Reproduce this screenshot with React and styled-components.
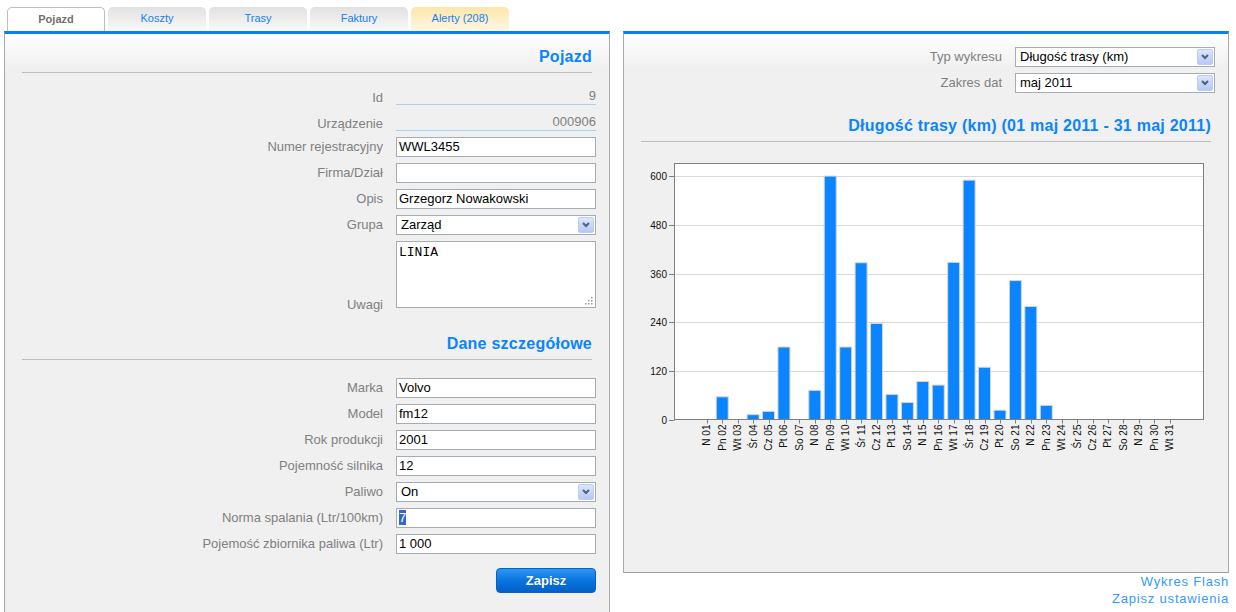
import React from 'react';
import styled, { createGlobalStyle } from 'styled-components';

const GlobalStyle = createGlobalStyle`
  html, body { margin: 0; padding: 0; background: #fff; }
  body {
    font-family: "Liberation Sans", Arial, sans-serif;
    font-size: 13px;
    color: #000;
    overflow: hidden;
  }
`;

const Page = styled.div`
  width: 1236px;
  height: 612px;
  box-sizing: border-box;
  padding: 7px 0 0 4px;
  display: grid;
  grid-template-columns: 606px 606px;
  grid-template-rows: 24px 1fr;
  column-gap: 13px;
`;

const Tabs = styled.div`
  display: flex;
  gap: 3px;
  padding-left: 3px;
  align-items: flex-end;
`;

const Tab = styled.div`
  width: 98px;
  height: 24px;
  box-sizing: border-box;
  border-radius: 5px 5px 0 0;
  display: flex;
  align-items: center;
  justify-content: center;
  font-size: 11px;
  color: ${p => (p.$active ? '#707070' : '#1580f2')};
  font-weight: ${p => (p.$active ? 'bold' : 'normal')};
  background: ${p =>
    p.$active
      ? '#fff'
      : p.$alert
      ? 'linear-gradient(#fde6ab, #fff7e4)'
      : 'linear-gradient(#e1e1e1, #f9f9f9)'};
  border: ${p => (p.$active ? '1px solid #bdbdbd' : 'none')};
  border-bottom: none;
  padding-bottom: 2px;
`;

const Panel = styled.div`
  box-sizing: border-box;
  border-top: 3px solid #0a80f2;
  border-left: 1px solid #a9a9a9;
  border-right: 1px solid #a9a9a9;
  border-bottom: ${p => (p.$closed ? '1px solid #a0a0a0' : 'none')};
  background: linear-gradient(#ffffff 0px, #f0f0f0 34px, #f0f0f0 100%);
  height: ${p => p.$h}px;
  padding-top: 13px;
`;

const Heading = styled.div`
  margin: ${p => p.$top || 0}px 17px 0 17px;
  padding-bottom: 5px;
  border-bottom: 1px solid #bdbdbd;
  text-align: right;
  font-size: 16px;
  line-height: 20px;
  font-weight: bold;
  letter-spacing: 0.25px;
  color: #0a84ff;
`;

const Form = styled.div`
  display: grid;
  grid-template-columns: 1fr 200px;
  grid-auto-rows: 20px;
  column-gap: 13px;
  row-gap: 6px;
  padding: ${p => p.$top}px ${p => p.$right || 13}px 0 17px;
`;

const Label = styled.div`
  text-align: right;
  color: #7f7f7f;
  white-space: nowrap;
  line-height: 20px;
  align-self: ${p => (p.$bottom ? 'end' : 'center')};
  ${p => (p.$bottom ? 'line-height: 16px;' : '')}
  ${p => (p.$read ? 'padding-top: 5px; line-height: 17px;' : '')}
`;

const ReadValue = styled.div`
  box-sizing: border-box;
  height: 20px;
  padding-top: 3px;
  line-height: 16px;
  text-align: right;
  color: #7f7f7f;
  border-bottom: 1px solid #a9cff5;
`;

const TextBox = styled.div`
  box-sizing: border-box;
  height: 20px;
  line-height: 18px;
  padding: 0 2px;
  background: #fff;
  border: 1px solid #a5acb2;
  white-space: nowrap;
  overflow: hidden;
`;

const Selected = styled.span`
  background: #3169c6;
  color: #fff;
`;

const SelectBox = styled.div`
  box-sizing: border-box;
  height: 20px;
  background: #fff;
  border: 1px solid #a5acb2;
  display: flex;
  align-items: stretch;
`;

const SelectText = styled.div`
  flex: 1;
  line-height: 18px;
  padding-left: 4px;
  white-space: nowrap;
  overflow: hidden;
`;

const DropButton = styled.div`
  width: 16px;
  margin: 1px;
  box-sizing: border-box;
  border: 1px solid #bccdf3;
  border-radius: 2px;
  background: linear-gradient(#dce6fc, #b6c9f5);
  display: flex;
  align-items: center;
  justify-content: center;
`;

const TextArea = styled.div`
  grid-row: span 3;
  position: relative;
  box-sizing: border-box;
  background: #fff;
  border: 1px solid #a5acb2;
  font-family: "Liberation Mono", "Courier New", monospace;
  font-size: 13px;
  padding: 3px 2px;
  line-height: 15px;
  height: 67px;
  align-self: start;
`;

const Grip = styled.svg`
  position: absolute;
  right: 2px;
  bottom: 2px;
`;

const ButtonRow = styled.div`
  display: flex;
  justify-content: flex-end;
  padding: 14px 13px 0 0;
`;

const SaveButton = styled.div`
  width: 100px;
  height: 25px;
  box-sizing: border-box;
  border-radius: 4px;
  border: 1px solid #0b5fc0;
  background: linear-gradient(#2d97f6 0%, #0b74de 50%, #0061c8 100%);
  color: #fff;
  font-weight: bold;
  font-size: 13px;
  display: flex;
  align-items: center;
  justify-content: center;
  text-shadow: 0 0 1px rgba(0, 0, 0, 0.3);
`;

const RightColumn = styled.div`
  display: flex;
  flex-direction: column;
`;

const ChartWrap = styled.div`
  margin-top: 8px;
  padding-left: 17px;
`;

const Links = styled.div`
  text-align: right;
  font-size: 13px;
  line-height: 17px;
  letter-spacing: 0.8px;
  color: #3399ff;
`;

const Chevron = () => (
  <svg width="8" height="6" viewBox="0 0 8 6">
    <path d="M1 1 L4 4 L7 1" stroke="#4d6185" strokeWidth="2" fill="none" />
  </svg>
);

const Select = ({ children }) => (
  <SelectBox>
    <SelectText>{children}</SelectText>
    <DropButton>
      <Chevron />
    </DropButton>
  </SelectBox>
);

const values = [0, 56, 0, 12, 20, 179, 0, 72, 601, 179, 387, 237, 62, 42, 94, 85, 388, 591, 129, 23, 343, 279, 35, 0, 0, 0, 0, 0, 0, 0, 0];
const dayNames = ['N', 'Pn', 'Wt', 'Śr', 'Cz', 'Pt', 'So'];
const labels = values.map((_, i) => `${dayNames[i % 7]} ${String(i + 1).padStart(2, '0')}`);

const Chart = () => {
  const axisY = 269.5;
  const scale = 0.405;
  const left = 33.5;
  const right = 562.5;
  const top = 13.5;
  const grid = [120, 240, 360, 480, 600];
  return (
    <svg width="570" height="320" style={{ display: 'block' }}>
      <rect x={left} y={top} width={right - left} height={axisY - top} fill="#fff" stroke="#7f7f7f" strokeWidth="1" />
      {grid.map(v => {
        const y = Math.round(axisY - v * scale) + 0.5;
        return <line key={v} x1={left + 0.5} x2={right - 0.5} y1={y} y2={y} stroke="#d9d9d9" strokeWidth="1" />;
      })}
      {[0, ...grid].map(v => {
        const y = Math.round(axisY - v * scale) + 0.5;
        return (
          <g key={'t' + v}>
            <line x1={28} x2={left} y1={y} y2={y} stroke="#7f7f7f" strokeWidth="1" />
            <text x={26} y={y + 3.5} textAnchor="end" fontSize="10" fontFamily="Liberation Sans, Arial, sans-serif" fill="#111">
              {v}
            </text>
          </g>
        );
      })}
      {values.map((v, i) => {
        const cx = 65.8 + 15.43 * i;
        const h = v * scale;
        return (
          <g key={i}>
            {v > 0 && (
              <rect x={cx - 6} y={axisY - h} width={12} height={h} fill="#0a84ff" stroke="#d6d6d6" strokeWidth="1" />
            )}
            <line x1={Math.round(cx) + 0.5} x2={Math.round(cx) + 0.5} y1={axisY} y2={axisY + 4} stroke="#7f7f7f" strokeWidth="1" />
            <text
              transform={`translate(${cx + 3.5}, ${axisY + 5}) rotate(-90)`}
              textAnchor="end"
              fontSize="10"
              fontFamily="Liberation Sans, Arial, sans-serif"
              fill="#111"
            >
              {labels[i]}
            </text>
          </g>
        );
      })}
      <line x1={left} x2={right} y1={axisY} y2={axisY} stroke="#7f7f7f" strokeWidth="1.2" />
    </svg>
  );
};

export default function App() {
  return (
    <>
      <GlobalStyle />
      <Page>
        <Tabs>
          <Tab $active>Pojazd</Tab>
          <Tab>Koszty</Tab>
          <Tab>Trasy</Tab>
          <Tab>Faktury</Tab>
          <Tab $alert>Alerty (208)</Tab>
        </Tabs>
        <div />
        <Panel $h={581}>
          <Heading>Pojazd</Heading>
          <Form $top={12}>
            <Label $read>Id</Label>
            <ReadValue>9</ReadValue>
            <Label $read>Urządzenie</Label>
            <ReadValue>000906</ReadValue>
            <Label>Numer rejestracyjny</Label>
            <TextBox>WWL3455</TextBox>
            <Label>Firma/Dział</Label>
            <TextBox />
            <Label>Opis</Label>
            <TextBox>Grzegorz Nowakowski</TextBox>
            <Label>Grupa</Label>
            <Select>Zarząd</Select>
            <Label $bottom style={{ gridRow: 'span 3' }}>Uwagi</Label>
            <TextArea>
              LINIA
              <Grip width="9" height="9" viewBox="0 0 9 9">
                {[[7, 1], [4, 4], [7, 4], [1, 7], [4, 7], [7, 7]].map(([x, y], k) => (
                  <rect key={k} x={x} y={y} width="1.5" height="1.5" fill="#9a9a9a" />
                ))}
              </Grip>
            </TextArea>
          </Form>
          <Heading $top={21}>Dane szczegółowe</Heading>
          <Form $top={18}>
            <Label>Marka</Label>
            <TextBox>Volvo</TextBox>
            <Label>Model</Label>
            <TextBox>fm12</TextBox>
            <Label>Rok produkcji</Label>
            <TextBox>2001</TextBox>
            <Label>Pojemność silnika</Label>
            <TextBox>12</TextBox>
            <Label>Paliwo</Label>
            <Select>On</Select>
            <Label>Norma spalania (Ltr/100km)</Label>
            <TextBox>
              <Selected>7</Selected>
            </TextBox>
            <Label>Pojemość zbiornika paliwa (Ltr)</Label>
            <TextBox>1 000</TextBox>
          </Form>
          <ButtonRow>
            <SaveButton>Zapisz</SaveButton>
          </ButtonRow>
        </Panel>
        <RightColumn>
          <Panel $h={542} $closed>
            <Form $top={0} $right={13}>
              <Label>Typ wykresu</Label>
              <Select>Długość trasy (km)</Select>
              <Label>Zakres dat</Label>
              <Select>maj 2011</Select>
            </Form>
            <Heading $top={23}>Długość trasy (km) (01 maj 2011 - 31 maj 2011)</Heading>
            <ChartWrap>
              <Chart />
            </ChartWrap>
          </Panel>
          <Links>
            <div>Wykres Flash</div>
            <div>Zapisz ustawienia</div>
          </Links>
        </RightColumn>
      </Page>
    </>
  );
}
